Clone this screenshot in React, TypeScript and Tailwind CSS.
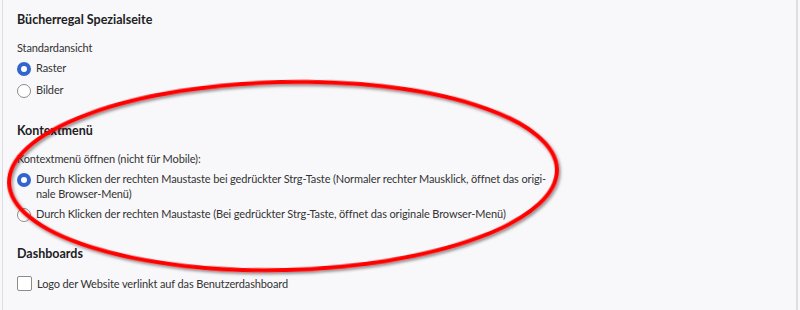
import React from 'react';

function Radio({ checked }: { checked?: boolean }) {
  return checked ? (
    <span className="mt-[2px] flex h-[14px] w-[14px] shrink-0 items-center justify-center rounded-full bg-[#3366cc]">
      <span className="h-[6px] w-[6px] rounded-full bg-white" />
    </span>
  ) : (
    <span className="mt-[2px] h-[14px] w-[14px] shrink-0 rounded-full border border-[#8c8c8c] bg-white" />
  );
}

function Section({ title, last, children }: { title: string; last?: boolean; children: React.ReactNode }) {
  return (
    <div className={last ? '' : 'mb-[25px]'}>
      <h2 className="mb-3 text-[12.5px] font-bold leading-4 tracking-normal text-[#202122]">{title}</h2>
      {children}
    </div>
  );
}

export default function App() {
  return (
    <div className="relative h-[310px] w-[800px] overflow-hidden bg-[#f8f8fa] font-['Lato',sans-serif] text-[11px] leading-[15px] tracking-[-0.12px] text-[#333]">
      <div className="ml-[2px] mr-[2px] h-full border-l border-r-2 border-[#dedee2] pl-[14px] pt-3">
        <Section title="Bücherregal Spezialseite">
          <p className="mb-[5px]">Standardansicht</p>
          <div className="flex flex-col gap-[5.5px]">
            <label className="flex items-start gap-[5px]">
              <Radio checked />
              <span>Raster</span>
            </label>
            <label className="flex items-start gap-[5px]">
              <Radio />
              <span>Bilder</span>
            </label>
          </div>
        </Section>

        <Section title="Kontextmenü">
          <p className="mb-[5px]">Kontextmenü öffnen (nicht für Mobile):</p>
          <div className="mb-[-1px] flex flex-col gap-[5px]">
            <label className="flex items-start gap-[5px]">
              <Radio checked />
              <span>
                Durch Klicken der rechten Maustaste bei gedrückter Strg-Taste (Normaler rechter Mausklick, öffnet das origi-
                <br />
                nale Browser-Menü)
              </span>
            </label>
            <label className="flex items-start gap-[5px]">
              <Radio />
              <span>Durch Klicken der rechten Maustaste (Bei gedrückter Strg-Taste, öffnet das originale Browser-Menü)</span>
            </label>
          </div>
        </Section>

        <Section title="Dashboards" last>
          <label className="mt-[14px] flex items-center gap-[5px]">
            <span className="h-[15px] w-[15px] shrink-0 rounded-[2px] border border-[#8c8c8c] bg-white" />
            <span>Logo der Website verlinkt auf das Benutzerdashboard</span>
          </label>
        </Section>
      </div>

      {/* red annotation drawn over the screenshot */}
      <svg className="pointer-events-none absolute left-0 top-0" width="800" height="310" viewBox="0 0 800 310">
        <defs>
          <filter id="shadow" x="-10%" y="-20%" width="120%" height="140%">
            <feDropShadow dx="1.5" dy="2" stdDeviation="1.5" floodColor="#000" floodOpacity="0.45" />
          </filter>
        </defs>
        <ellipse
          cx="283"
          cy="176"
          rx="274"
          ry="94"
          transform="rotate(-1.4 283 176)"
          fill="none"
          stroke="#f00"
          strokeWidth="4"
          filter="url(#shadow)"
        />
      </svg>
    </div>
  );
}
